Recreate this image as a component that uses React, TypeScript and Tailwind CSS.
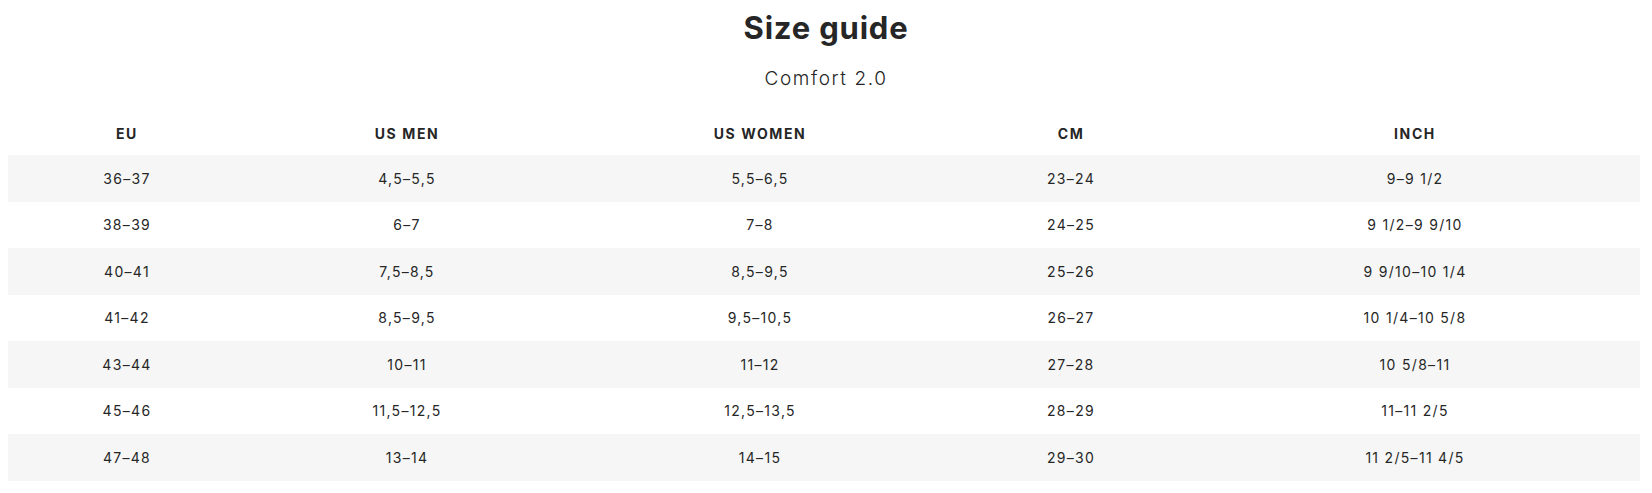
import React from 'react';

const rows = [
  ['36–37', '4,5–5,5', '5,5–6,5', '23–24', '9–9 1/2'],
  ['38–39', '6–7', '7–8', '24–25', '9 1/2–9 9/10'],
  ['40–41', '7,5–8,5', '8,5–9,5', '25–26', '9 9/10–10 1/4'],
  ['41–42', '8,5–9,5', '9,5–10,5', '26–27', '10 1/4–10 5/8'],
  ['43–44', '10–11', '11–12', '27–28', '10 5/8–11'],
  ['45–46', '11,5–12,5', '12,5–13,5', '28–29', '11–11 2/5'],
  ['47–48', '13–14', '14–15', '29–30', '11 2/5–11 4/5'],
];

const headers = ['EU', 'US MEN', 'US WOMEN', 'CM', 'INCH'];

const cols = 'grid grid-cols-[238px_322px_384px_238px_1fr]';

export default function App() {
  return (
    <div className="w-[1652px] h-[493px] bg-white text-[#262626] font-['Inter',sans-serif]">
      {/* Title */}
      <div className="pt-[9px] text-center">
        <h1 className="text-[31px] leading-[38px] font-bold tracking-[0.8px]">Size guide</h1>
        <p className="mt-[21px] text-[19px] leading-[22px] font-light tracking-[1.6px]">Comfort 2.0</p>
      </div>

      {/* Table */}
      <div className="mx-[8px] mt-[21px] w-[1632px]">
        <div className={`${cols} h-[44px] items-center text-[14px] font-bold tracking-[1.6px]`}>
          {headers.map((h) => (
            <div key={h} className="text-center">{h}</div>
          ))}
        </div>
        {rows.map((r, i) => (
          <div
            key={i}
            className={`${cols} h-[46.5px] items-center text-[14px] tracking-[1.3px] ${i % 2 === 0 ? 'bg-[#f5f6f5]' : 'bg-white'}`}
          >
            {r.map((c, j) => (
              <div key={j} className="text-center">{c}</div>
            ))}
          </div>
        ))}
      </div>
    </div>
  );
}
